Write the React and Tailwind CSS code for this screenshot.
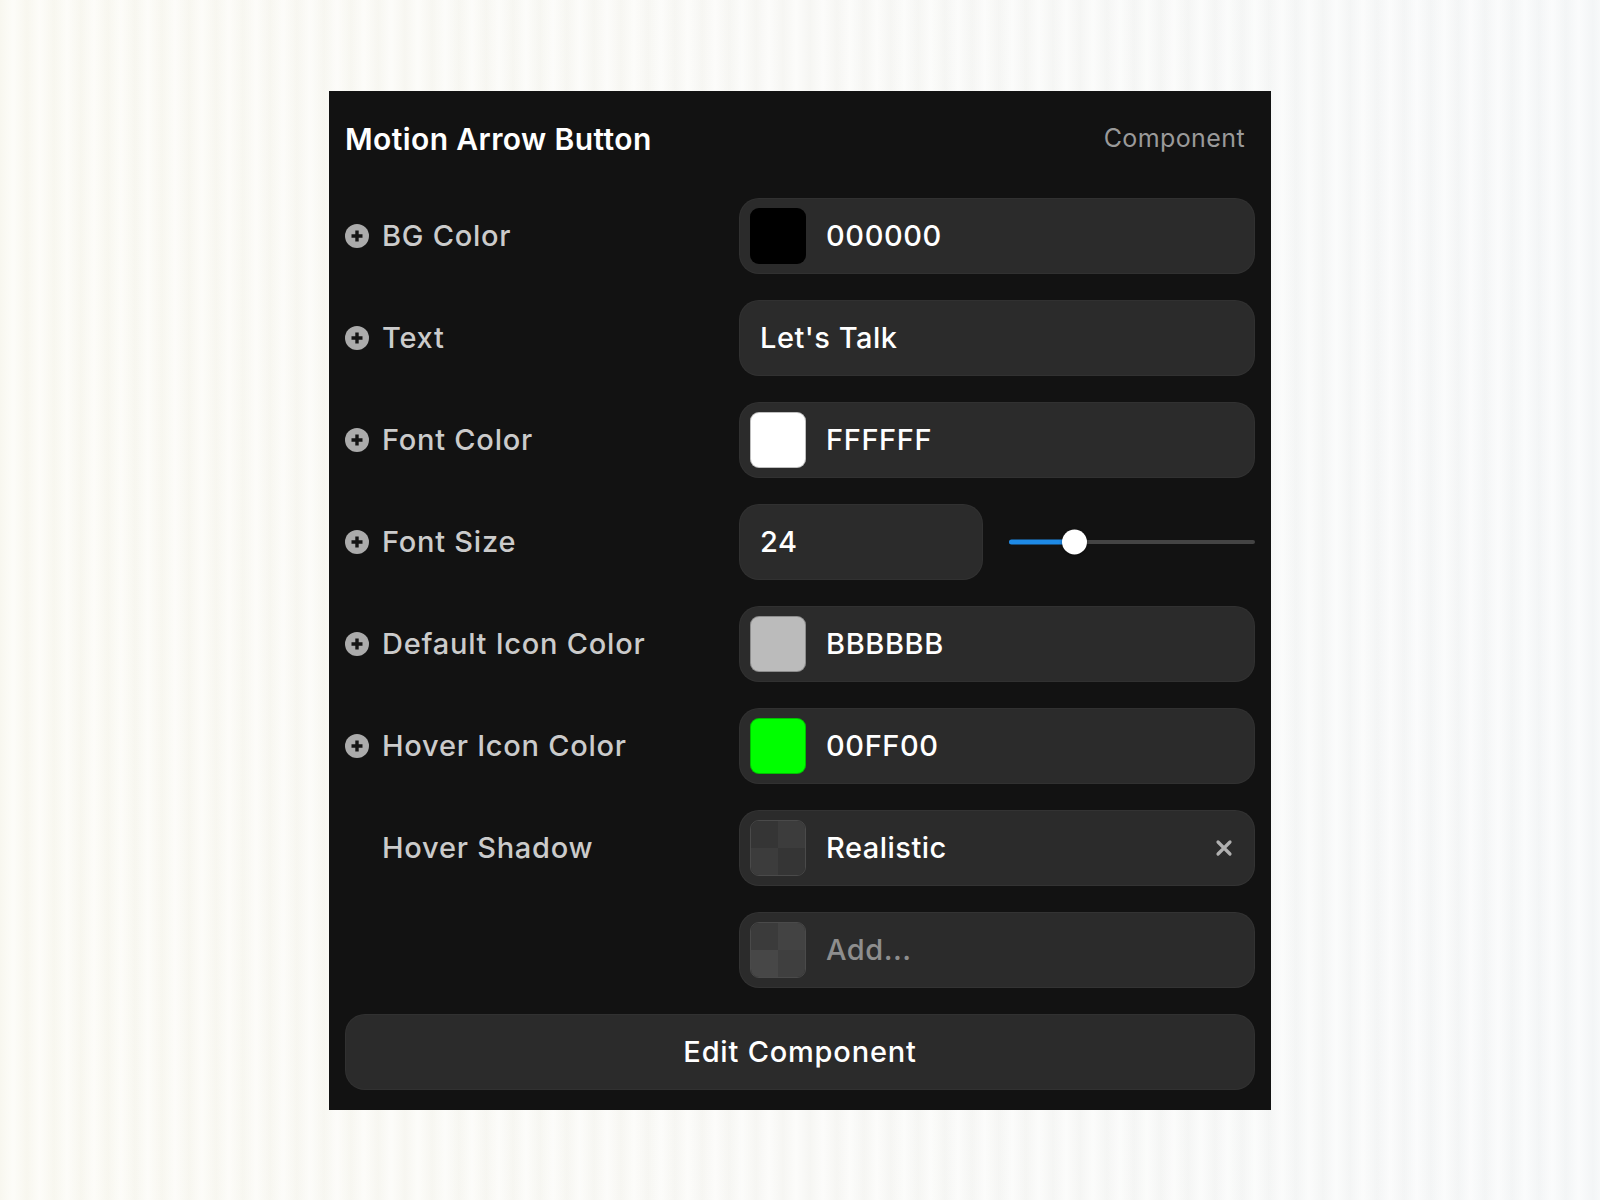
import React from "react";

function PlusIcon() {
  return (
    <svg width="24" height="24" viewBox="0 0 24 24" className="shrink-0">
      <circle cx="12" cy="12" r="12" fill="#ababab" />
      <path d="M12 6.5v11M6.5 12h11" stroke="#141414" strokeWidth="3.4" strokeLinecap="butt" />
    </svg>
  );
}

function XIcon() {
  return (
    <svg width="18" height="18" viewBox="0 0 18 18">
      <path d="M3 3l12 12M15 3L3 15" stroke="#b0b0b0" strokeWidth="3.2" strokeLinecap="round" />
    </svg>
  );
}

function Label({ text, icon = true }) {
  return (
    <div className="flex h-[76px] items-center gap-[13px] text-[29px] font-medium tracking-[0.75px] text-[#cbcbcb]">
      {icon ? <PlusIcon /> : <span className="w-[24px] shrink-0" />}
      <span>{text}</span>
    </div>
  );
}

function Swatch({ color }) {
  return (
    <div
      className="h-[56px] w-[56px] shrink-0 rounded-[9px] shadow-[inset_0_0_0_1px_rgba(0,0,0,0.25)]"
      style={{ backgroundColor: color }}
    />
  );
}

function Checker({ light }) {
  return (
    <div className="grid h-[56px] w-[56px] shrink-0 grid-cols-2 grid-rows-2 overflow-hidden rounded-[9px] border border-[#4a4a4a]">
      <div className={light ? "bg-[#3b3b3b]" : "bg-[#353535]"} />
      <div className={light ? "bg-[#434343]" : "bg-[#3c3c3c]"} />
      <div className={light ? "bg-[#474747]" : "bg-[#3c3c3c]"} />
      <div className={light ? "bg-[#3f3f3f]" : "bg-[#353535]"} />
    </div>
  );
}

function ColorInput({ color, value }) {
  return (
    <div className="flex h-[76px] items-center gap-[20px] rounded-[20px] border border-[#ffffff08] bg-[#2b2b2b] pl-[10px] pr-[20px] text-[29px] font-medium tracking-[0.6px] text-white">
      <Swatch color={color} />
      <span>{value}</span>
    </div>
  );
}

export default function App() {
  return (
    <div className="flex min-h-screen items-center justify-center bg-[repeating-linear-gradient(90deg,rgba(0,0,0,0.012)_0px,rgba(255,255,255,0.5)_13px,rgba(0,0,0,0.012)_27px),linear-gradient(90deg,#fbfaf2,#f9f9f6,#f6f8f9)] font-['Inter',sans-serif]">
      <div className="flex w-[942px] flex-col gap-[26px] bg-[#121212] px-4 pb-[20px] pt-4">
        <div className="flex h-[65px] items-center justify-between pr-[10px]">
          <div className="text-[30px] font-semibold tracking-[0.4px] text-white">Motion Arrow Button</div>
          <div className="text-[25px] tracking-[0.4px] text-[#9a9a9a]">Component</div>
        </div>

        <div className="grid grid-cols-[394px_1fr] gap-y-[26px]">
          <Label text="BG Color" />
          <ColorInput color="#000000" value="000000" />

          <Label text="Text" />
          <div className="flex h-[76px] items-center rounded-[20px] border border-[#ffffff08] bg-[#2b2b2b] px-[20px] text-[29px] font-medium tracking-[0.5px] text-white">
            Let's Talk
          </div>

          <Label text="Font Color" />
          <ColorInput color="#ffffff" value="FFFFFF" />

          <Label text="Font Size" />
          <div className="flex h-[76px] items-center gap-[26px]">
            <div className="flex h-[76px] w-[244px] shrink-0 items-center rounded-[20px] border border-[#ffffff08] bg-[#2b2b2b] px-[20px] text-[29px] font-medium tracking-[0.6px] text-white">
              24
            </div>
            <div className="relative flex h-[26px] flex-1 items-center">
              <div className="h-[4px] w-full rounded-full bg-[#444444]" />
              <div className="absolute left-0 top-1/2 h-[5px] w-[66px] -translate-y-1/2 rounded-full bg-[#1e8ae6]" />
              <div className="absolute left-[53px] top-1/2 h-[25px] w-[25px] -translate-y-1/2 rounded-full bg-white shadow-[0_1px_3px_rgba(0,0,0,0.4)]" />
            </div>
          </div>

          <Label text="Default Icon Color" />
          <ColorInput color="#bbbbbb" value="BBBBBB" />

          <Label text="Hover Icon Color" />
          <ColorInput color="#00ff00" value="00FF00" />

          <Label text="Hover Shadow" icon={false} />
          <div className="flex h-[76px] items-center gap-[20px] rounded-[20px] border border-[#ffffff0a] bg-[#2b2b2b] pl-[10px] pr-[21px] text-[29px] font-medium tracking-[0.5px] text-white">
            <Checker />
            <span className="flex-1">Realistic</span>
            <XIcon />
          </div>

          <div />
          <div className="flex h-[76px] items-center gap-[20px] rounded-[20px] border border-[#ffffff0a] bg-[#2b2b2b] pl-[10px] pr-[20px] text-[29px] font-medium tracking-[0.5px] text-[#8e8e8e]">
            <Checker light />
            <span>Add...</span>
          </div>
        </div>

        <div className="flex h-[76px] items-center justify-center rounded-[20px] border border-[#ffffff08] bg-[#2b2b2b] text-[29px] font-medium tracking-[0.8px] text-white">
          Edit Component
        </div>
      </div>
    </div>
  );
}
